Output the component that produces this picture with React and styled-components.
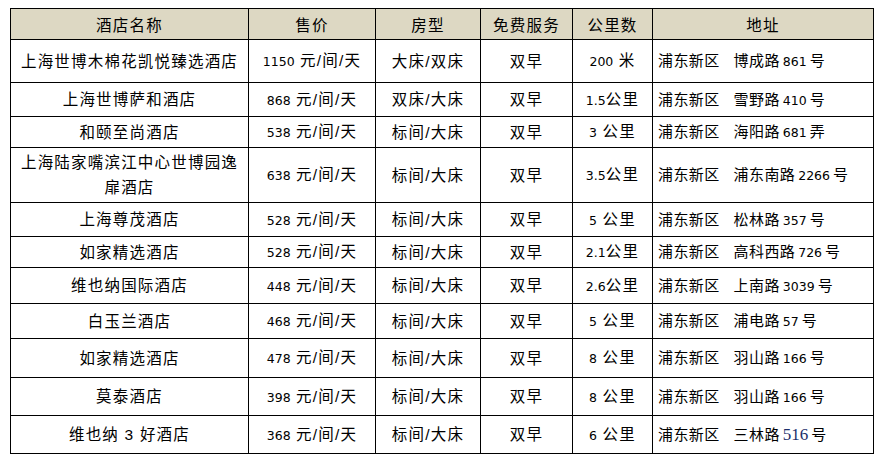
import React from 'react';
import styled, { createGlobalStyle } from 'styled-components';

const GlobalStyle = createGlobalStyle`
  html, body {
    margin: 0;
    padding: 0;
    background: #fff;
  }
  body {
    padding: 8px 0 0 10px;
    font-family: "Liberation Sans", "Noto Sans CJK SC", sans-serif;
    color: #000;
  }
`;

const Table = styled.table`
  border-collapse: collapse;
  table-layout: fixed;
  width: 857px;
  font-size: 15.5px;
  letter-spacing: 1.2px;
`;

const HeadCell = styled.th`
  background: #ddd8c3;
  border: 1px solid #000;
  height: 30px;
  padding: 0;
  font-weight: normal;
  text-align: center;
  vertical-align: middle;
  width: ${p => p.$w}px;
`;

const Cell = styled.td`
  border: 1px solid #000;
  padding: 0 4px;
  text-align: center;
  vertical-align: middle;
  line-height: 25px;
  white-space: ${p => (p.$wrap ? 'normal' : 'nowrap')};
`;

const AddressCell = styled(Cell)`
  text-align: left;
  padding-left: 5px;
  font-size: 15px;
  letter-spacing: 0.4px;
`;

const District = styled.span`
  margin-right: 14px;
`;

const Row = styled.tr`
  height: ${p => p.$h}px;
`;

const Num = styled.span`
  font-family: "DejaVu Sans", sans-serif;
  font-size: 12.5px;
  letter-spacing: 0;
  margin: 0 ${p => (p.$pad ? '3px' : '0')};
`;

const BlueNum = styled.span`
  font-family: "Liberation Serif", serif;
  font-size: 17px;
  color: #1c2f6b;
  letter-spacing: 0;
  margin: 0 3px;
`;

const columns = [
  { title: '酒店名称', w: 237 },
  { title: '售价', w: 126 },
  { title: '房型', w: 104 },
  { title: '免费服务', w: 91 },
  { title: '公里数', w: 79 },
  { title: '地址', w: 220 },
];

const hotels = [
  { name: '上海世博木棉花凯悦臻选酒店', price: '1150', room: '大床/双床', dist: ['200', ' 米'], road: '博成路', no: '861', h: 43 },
  { name: '上海世博萨和酒店', price: '868', room: '双床/大床', dist: ['1.5', '公里'], road: '雪野路', no: '410', h: 34 },
  { name: '和颐至尚酒店', price: '538', room: '标间/大床', dist: ['3', ' 公里'], road: '海阳路', no: '681', tail: '弄', h: 31 },
  { name: '上海陆家嘴滨江中心世博园逸扉酒店', price: '638', room: '标间/大床', dist: ['3.5', '公里'], road: '浦东南路', no: '2266', h: 55 },
  { name: '上海尊茂酒店', price: '528', room: '标间/大床', dist: ['5', ' 公里'], road: '松林路', no: '357', h: 34 },
  { name: '如家精选酒店', price: '528', room: '标间/大床', dist: ['2.1', '公里'], road: '高科西路', no: '726', h: 31 },
  { name: '维也纳国际酒店', price: '448', room: '标间/大床', dist: ['2.6', '公里'], road: '上南路', no: '3039', h: 36 },
  { name: '白玉兰酒店', price: '468', room: '标间/大床', dist: ['5', ' 公里'], road: '浦电路', no: '57', h: 35 },
  { name: '如家精选酒店', price: '478', room: '标间/大床', dist: ['8', ' 公里'], road: '羽山路', no: '166', h: 39 },
  { name: '莫泰酒店', price: '398', room: '标间/大床', dist: ['8', ' 公里'], road: '羽山路', no: '166', h: 38 },
  { name: '维也纳 3 好酒店', price: '368', room: '标间/大床', dist: ['6', ' 公里'], road: '三林路', no: '516', blue: true, h: 38 },
];

export default function App() {
  return (
    <>
      <GlobalStyle />
      <Table>
        <thead>
          <tr>
            {columns.map(c => (
              <HeadCell key={c.title} $w={c.w}>{c.title}</HeadCell>
            ))}
          </tr>
        </thead>
        <tbody>
          {hotels.map((h, i) => (
            <Row key={i} $h={h.h}>
              <Cell $wrap>{h.name}</Cell>
              <Cell><Num>{h.price}</Num> 元/间/天</Cell>
              <Cell>{h.room}</Cell>
              <Cell>双早</Cell>
              <Cell><Num>{h.dist[0]}</Num>{h.dist[1]}</Cell>
              <AddressCell>
                <District>浦东新区</District>
                {h.road}
                {h.blue ? <BlueNum>{h.no}</BlueNum> : <Num $pad>{h.no}</Num>}
                {h.tail || '号'}
              </AddressCell>
            </Row>
          ))}
        </tbody>
      </Table>
    </>
  );
}
